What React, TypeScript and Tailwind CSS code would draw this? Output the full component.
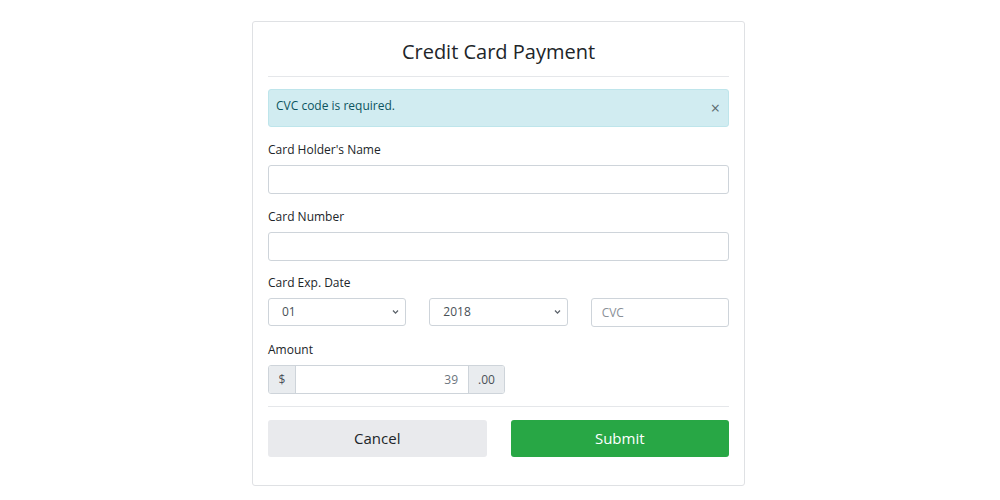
import React from 'react';

const font = { fontFamily: '"Open Sans", "Noto Sans", sans-serif' };

const Chevron = () => (
  <svg width="7" height="5" viewBox="0 0 7 5" className="absolute right-[6px] top-1/2 -translate-y-1/2">
    <path d="M1 1 L3.5 3.6 L6 1" fill="none" stroke="#5a6169" strokeWidth="1.3" />
  </svg>
);

const Label = ({ children }: { children: React.ReactNode }) => (
  <div className="text-[12px] leading-[16px] text-[#212529] mb-[7px]">{children}</div>
);

const TextInput = ({ placeholder }: { placeholder?: string }) => (
  <div className="h-[29px] border border-[#ced4da] rounded-[3px] bg-white flex items-center px-[10px] text-[12px] text-[#8a9097]">
    {placeholder}
  </div>
);

const SelectBox = ({ value }: { value: string }) => (
  <div className="relative h-[28px] border border-[#ced4da] rounded-[3px] bg-white flex items-center pl-[13px] text-[12px] text-[#495057]">
    {value}
    <Chevron />
  </div>
);

export default function App() {
  return (
    <div className="w-[1000px] h-[500px] bg-white pt-[21px]" style={font}>
      <div className="ml-[252px] w-[493px] h-[465px] border border-[#dfe1e4] rounded-[3px] px-[15px] pt-[15px]">
        <h1 className="text-center text-[20px] leading-[30px] text-[#212529]">Credit Card Payment</h1>
        <div className="border-t border-[#e5e7ea] mt-[9px]" />

        <div className="mt-[12px] h-[38px] bg-[#d1ecf1] border border-[#bee5eb] rounded-[3px] flex items-center justify-between pl-[7px] pr-[8px] text-[12px] text-[#0c5460]">
          <span className="-mt-[5px]">CVC code is required.</span>
          <span className="text-[16px] text-[#5a6a6e] leading-none">×</span>
        </div>

        <div className="mt-[15px]">
          <Label>Card Holder's Name</Label>
          <TextInput />
        </div>

        <div className="mt-[15px]">
          <Label>Card Number</Label>
          <TextInput />
        </div>

        <div className="mt-[14px]">
          <Label>Card Exp. Date</Label>
          <div className="grid grid-cols-3 gap-[23px]">
            <SelectBox value="01" />
            <SelectBox value="2018" />
            <TextInput placeholder="CVC" />
          </div>
        </div>

        <div className="mt-[15px]">
          <Label>Amount</Label>
          <div className="flex w-[237px] h-[29px] border border-[#ced4da] rounded-[3px] text-[12px] text-[#495057] overflow-hidden">
            <div className="w-[27px] bg-[#e9ecef] border-r border-[#ced4da] flex items-center justify-center">$</div>
            <div className="flex-1 bg-white flex items-center justify-end pr-[10px] text-[#6c757d]">39</div>
            <div className="w-[36px] bg-[#e9ecef] border-l border-[#ced4da] flex items-center justify-center">.00</div>
          </div>
        </div>

        <div className="border-t border-[#e5e7ea] mt-[12px]" />

        <div className="mt-[13px] grid grid-cols-2 gap-[24px]">
          <button className="h-[37px] bg-[#e9eaed] rounded-[3px] text-[15px] text-[#212529]">Cancel</button>
          <button className="h-[37px] bg-[#28a745] rounded-[3px] text-[15px] text-white">Submit</button>
        </div>
      </div>
    </div>
  );
}
